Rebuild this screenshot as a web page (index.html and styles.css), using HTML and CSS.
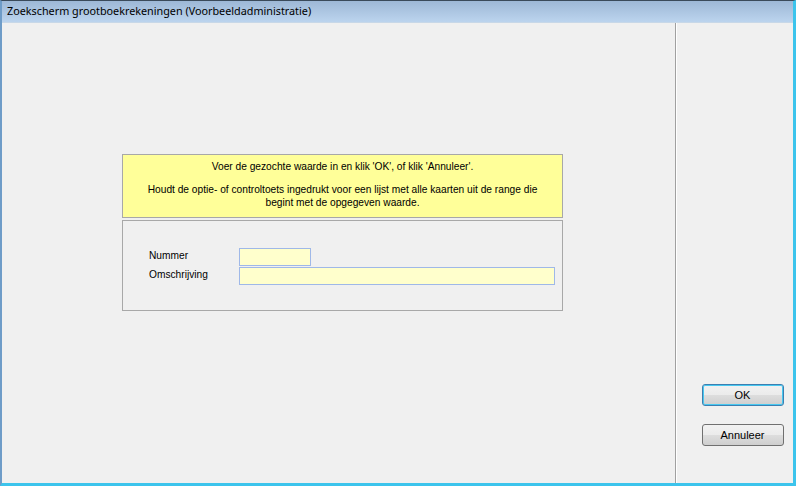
FILE: index.html
```html
<!DOCTYPE html>
<html lang="nl">
<head>
    <meta charset="UTF-8">
    <title>Zoekscherm grootboekrekeningen</title>
    <link rel="stylesheet" href="styles.css">
</head>
<body>
    <div class="window">
        <!-- Title bar -->
        <header class="titlebar">Zoekscherm grootboekrekeningen (Voorbeeldadministratie)</header>

        <div class="content">
            <!-- Search area -->
            <main class="main">
                <div class="panel">
                    <div class="hint">
                        <p>Voer de gezochte waarde in en klik 'OK', of klik 'Annuleer'.</p>
                        <p>Houdt de optie- of controltoets ingedrukt voor een lijst met alle kaarten uit de range die<br>begint met de opgegeven waarde.</p>
                    </div>
                    <form class="fields">
                        <div class="field">
                            <label for="nummer">Nummer</label>
                            <input type="text" id="nummer" class="input short">
                        </div>
                        <div class="field">
                            <label for="omschrijving">Omschrijving</label>
                            <input type="text" id="omschrijving" class="input long">
                        </div>
                    </form>
                </div>
            </main>

            <!-- Buttons -->
            <aside class="side">
                <button class="button default">OK</button>
                <button class="button">Annuleer</button>
            </aside>
        </div>
    </div>
</body>
</html>
```

FILE: styles.css
```css
* {
    margin: 0;
    padding: 0;
    box-sizing: border-box;
}

body {
    width: 796px;
    height: 486px;
    overflow: hidden;
    background-color: #f0f0f0;
}

.window {
    width: 796px;
    height: 486px;
    display: flex;
    flex-direction: column;
    border-left: 2px solid #6e9cc8;
    border-right: 3px solid #3cc4ec;
    border-bottom: 3px solid #3cc4ec;
    border-top: 1px solid #3a4a5a;
    background-color: #f0f0f0;
}

.titlebar {
    height: 22px;
    padding: 2px 0 0 5px;
    background: linear-gradient(#9db8d6, #bcd4ee);
    color: #000;
    font-family: "Noto Sans", sans-serif;
    font-size: 10.8px;
    line-height: 16px;
    border-bottom: 1px solid #c8d8e8;
}

.content {
    flex: 1;
    display: flex;
}

.main {
    flex: 1;
    border-right: 1px solid #a0a0a0;
    box-shadow: 1px 0 0 #ffffff;
}

.panel {
    width: 441px;
    margin: 131px 0 0 120px;
    font-family: "Liberation Sans", sans-serif;
    font-size: 10.2px;
    color: #000;
}

.hint {
    height: 64px;
    padding: 5px 4px 0;
    border: 1px solid #a8a8a8;
    background-color: #ffff99;
    text-align: center;
    line-height: 13px;
}

.hint p + p {
    margin-top: 10px;
}

.fields {
    height: 91px;
    margin-top: 2px;
    padding: 27px 7px 0 26px;
    border: 1px solid #a8a8a8;
    display: flex;
    flex-direction: column;
    gap: 1px;
}

.field {
    display: flex;
    align-items: center;
}

.field label {
    width: 90px;
    padding-bottom: 3px;
}

.input {
    height: 18px;
    border: 1px solid #9fb8e8;
    background-color: #ffffcc;
    outline: none;
}

.input.short {
    width: 72px;
}

.input.long {
    width: 316px;
}

.side {
    width: 117px;
    display: flex;
    flex-direction: column;
    align-items: center;
    padding-top: 361px;
    gap: 18px;
}

.button {
    width: 82px;
    height: 22px;
    margin-left: 16px;
    border: 1px solid #707070;
    border-radius: 3px;
    background: linear-gradient(#f2f2f2 0%, #ebebeb 50%, #dddddd 51%, #cfcfcf 100%);
    font-family: "Liberation Sans", sans-serif;
    font-size: 11px;
    color: #000;
}

.button.default {
    border-color: #3c7fb1;
    box-shadow: inset 0 0 0 1px #48c8f0;
}
```
